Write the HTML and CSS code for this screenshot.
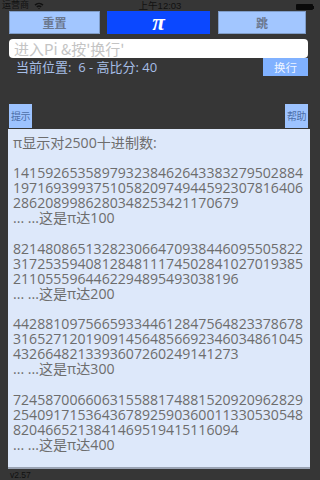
FILE: index.html
```html
<!DOCTYPE html>
<html>
<head>
<meta charset="utf-8">
<link rel="stylesheet" href="styles.css">
</head>
<body>
<div class="screen">
  <div class="status">
    <div class="carrier">运营商
      <svg class="wifi" width="10" height="8" viewBox="0 0 10 8"><path d="M0.5 2.6 A6.5 6.5 0 0 1 9.5 2.6 L8.4 3.7 A5 5 0 0 0 1.6 3.7 Z M2.3 4.4 A4 4 0 0 1 7.7 4.4 L6.6 5.5 A2.5 2.5 0 0 0 3.4 5.5 Z M4.1 6.2 A1.4 1.4 0 0 1 5.9 6.2 L5 7.2 Z" fill="#111"/></svg>
    </div>
    <div class="time">上午12:03</div>
    <div class="battery"><span class="cell"></span><span class="tip"></span></div>
  </div>
  <div class="toprow">
    <button class="btn light wide">重置</button>
    <button class="btn pi">π</button>
    <button class="btn light jump">跳</button>
  </div>
  <div class="field">进入Pi &amp;按'换行'</div>
  <div class="inforow">
    <span class="info">当前位置:&nbsp; 6 - 高比分: 40</span>
    <button class="btn enter">换行</button>
  </div>
  <div class="helprow">
    <button class="btn small">提示</button>
    <button class="btn small">帮助</button>
  </div>
  <div class="textarea">π显示对2500十进制数:

141592653589793238462643383279502884
197169399375105820974944592307816406
2862089986280348253421170679
... ...这是π达100

821480865132823066470938446095505822
317253594081284811174502841027019385
2110555964462294895493038196
... ...这是π达200

442881097566593344612847564823378678
316527120190914564856692346034861045
4326648213393607260249141273
... ...这是π达300

724587006606315588174881520920962829
254091715364367892590360011330530548
8204665213841469519415116094
... ...这是π达400</div>
  <div class="version">v2.57</div>
</div>
</body>
</html>
```
FILE: styles.css
```css
html, body {
  margin: 0;
  padding: 0;
  background: #363636;
}
.screen {
  width: 320px;
  height: 480px;
  background: #363636;
  font-family: "Open Sans", "Noto Sans CJK SC", sans-serif;
  overflow: hidden;
  display: flex;
  flex-direction: column;
}
.status {
  height: 11px;
  display: flex;
  align-items: flex-start;
  justify-content: space-between;
  padding: 0 6px 0 2px;
  font-size: 9px;
  line-height: 9px;
  color: #111;
  font-family: "Liberation Sans", "Noto Sans CJK SC", sans-serif;
  position: relative;
}
.carrier {
  display: flex;
  align-items: center;
  gap: 5px;
  margin-top: 1px;
}
.time {
  position: absolute;
  left: 0;
  right: 0;
  text-align: center;
  top: 1px;
  font-size: 9.5px;
  line-height: 9px;
}
.battery {
  display: flex;
  align-items: center;
  margin-top: 4px;
}
.battery .cell {
  width: 17px;
  height: 6px;
  background: #0a0a0a;
  border-radius: 1px;
}
.battery .tip {
  width: 1px;
  height: 3px;
  background: #0a0a0a;
}
.btn {
  border: none;
  margin: 0;
  padding: 0;
  font-family: "Open Sans", "Noto Sans CJK SC", sans-serif;
  cursor: pointer;
}
.toprow {
  display: flex;
  padding-left: 9px;
  height: 23px;
}
.btn.light {
  background: #a2c6ff;
  border: 1px solid #7f9cc8;
  color: #6b7890;
  font-size: 12px;
  font-weight: bold;
  height: 23px;
}
.btn.wide {
  width: 91px;
}
.btn.pi {
  width: 103px;
  margin-left: 7px;
  height: 23px;
  background: #0b48ff;
  color: #fff;
  font-family: "Liberation Serif", "DejaVu Serif", serif;
  font-weight: bold;
  font-style: italic;
  font-size: 23px;
  line-height: 20px;
}
.btn.jump {
  width: 88px;
  margin-left: 8px;
}
.field {
  margin: 5px 12px 0 9px;
  height: 19px;
  background: #fff;
  border-radius: 4px;
  color: #c4c4c4;
  font-size: 15px;
  line-height: 19px;
  padding-left: 5px;
  font-family: "Noto Sans CJK SC", sans-serif;
}
.inforow {
  display: flex;
  justify-content: space-between;
  align-items: flex-start;
  padding: 0 12px 0 16px;
  height: 18px;
}
.info {
  color: #a6bee6;
  font-size: 13px;
  margin-top: 2px;
  line-height: 15px;
}
.btn.enter {
  width: 45px;
  height: 18px;
  background: #80b1ff;
  color: #eef4ff;
  font-size: 11.5px;
}
.helprow {
  display: flex;
  justify-content: space-between;
  padding: 0 12px 0 9px;
  margin-top: 28px;
  height: 25px;
}
.btn.small {
  width: 23px;
  height: 24px;
  background: #9dc3ff;
  color: #4d6fa8;
  font-size: 10px;
  line-height: 24px;
  letter-spacing: -0.5px;
}
.textarea {
  margin-left: 8px;
  width: 297px;
  height: 332px;
  background: #dde8fa;
  border-bottom: 2px solid #9aa3b3;
  padding: 6px 0 0 5px;
  color: #6d6d6d;
  font-size: 14.1px;
  line-height: 15.1px;
  white-space: pre;
  overflow: hidden;
}
.version {
  padding-left: 10px;
  font-size: 8.5px;
  color: #111;
  line-height: 10px;
  margin-top: 1px;
  font-family: "Liberation Sans", sans-serif;
}
```
